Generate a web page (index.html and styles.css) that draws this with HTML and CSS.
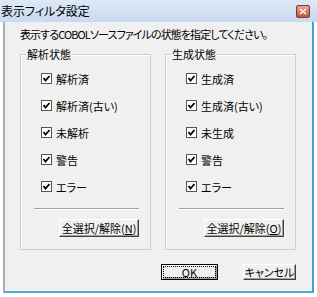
FILE: index.html
```html
<!DOCTYPE html>
<html lang="ja">
  <head>
    <meta charset="UTF-8" />
    <title>表示フィルタ設定</title>
    <link rel="stylesheet" href="styles.css">
  </head>
  <body>
    <div class="window">
      <div class="titlebar">
        <span class="title">表示フィルタ設定</span>
        <span class="close">
          <svg width="8" height="7" viewBox="0 0 8 7"><path d="M1 1 L7 6 M7 1 L1 6" stroke="#fff" stroke-width="1.6"/></svg>
        </span>
      </div>
      <div class="client">
        <p class="desc">表示するCOBOLソースファイルの状態を指定してください。</p>
        <div class="groups">
          <fieldset class="group">
            <legend>解析状態</legend>
            <ul class="checks">
              <li><span class="box"></span>解析済</li>
              <li><span class="box"></span>解析済(古い)</li>
              <li><span class="box"></span>未解析</li>
              <li><span class="box"></span>警告</li>
              <li><span class="box"></span>エラー</li>
            </ul>
            <div class="sep"></div>
            <div class="group-actions"><button class="btn wide">全選択/解除(<u>N</u>)</button></div>
          </fieldset>
          <fieldset class="group">
            <legend>生成状態</legend>
            <ul class="checks">
              <li><span class="box"></span>生成済</li>
              <li><span class="box"></span>生成済(古い)</li>
              <li><span class="box"></span>未生成</li>
              <li><span class="box"></span>警告</li>
              <li><span class="box"></span>エラー</li>
            </ul>
            <div class="sep"></div>
            <div class="group-actions"><button class="btn wide">全選択/解除(<u>O</u>)</button></div>
          </fieldset>
        </div>
        <div class="footer">
          <button class="btn ok"><span class="focus">OK</span></button>
          <button class="btn cancel">キャンセル</button>
        </div>
      </div>
    </div>
  </body>
</html>
```

FILE: styles.css
```css
body {
  margin: 0;
  background: #fff;
  font-family: "Noto Sans CJK JP", "Liberation Sans", sans-serif;
  font-feature-settings: "palt";
  font-size: 11px;
  color: #000;
}
.window {
  width: 317px;
  height: 297px;
  background: #fff;
}
.titlebar {
  height: 22px;
  display: flex;
  align-items: center;
  justify-content: space-between;
  background: linear-gradient(#dde9f6, #c8daee);
  padding: 0 7px 0 1px;
  box-sizing: border-box;
}
.title {
  font-size: 12px;
  line-height: 12px;
}
.close {
  width: 14px;
  height: 13px;
  box-sizing: border-box;
  border: 1px solid #7a3a30;
  border-radius: 2px;
  background: linear-gradient(#eba493, #c8503e);
  display: flex;
  align-items: center;
  justify-content: center;
}
.client {
  margin: 0 3px 0 3px;
  height: 271px;
  box-sizing: border-box;
  background: #f0f0f0;
  border-left: 2px solid #a4b0bc;
  border-right: 2px solid #3da2d3;
  border-bottom: 2px solid #4aaed8;
  padding: 6px 0 0 15px;
}
.desc {
  margin: 0;
  line-height: 12px;
  letter-spacing: -0.9px;
}
.groups {
  display: flex;
  gap: 14px;
  margin-top: 8px;
}
.group {
  width: 131px;
  box-sizing: border-box;
  margin: 0;
  padding: 0 0 12px 0;
  border: 1px solid #cfcfcf;
  box-shadow: inset 1px 1px #fff;
}
.group legend {
  margin-left: 5px;
  padding: 0 1px;
  line-height: 12px;
}
.checks {
  list-style: none;
  margin: 5px 0 0 0;
  padding: 0 0 0 20px;
}
.checks li {
  height: 27px;
  display: flex;
  align-items: center;
  gap: 4px;
}
.box {
  width: 11px;
  height: 11px;
  box-sizing: border-box;
  border: 1px solid #555;
  background: #fff url("data:image/svg+xml,%3Csvg xmlns='http://www.w3.org/2000/svg' width='9' height='9'%3E%3Cpath d='M1.5 4 L3.5 6.5 L7.5 2' fill='none' stroke='%23000' stroke-width='1.8'/%3E%3C/svg%3E") center no-repeat;
}
.sep {
  margin: 8px 11px 0 13px;
  border-top: 1px solid #a0a0a0;
  border-bottom: 1px solid #fff;
}
.group-actions {
  display: flex;
  justify-content: flex-end;
  padding-right: 11px;
  margin-top: 9px;
}
.btn {
  font-family: inherit;
  font-feature-settings: "palt";
  font-size: 11px;
  line-height: 12px;
  background: #f0f0f0;
  color: #000;
  border: 1px solid;
  border-color: #fff #404040 #404040 #fff;
  box-shadow: inset -1px -1px #a0a0a0;
  padding: 0;
  height: 18px;
}
.btn.wide {
  width: 80px;
}
.footer {
  display: flex;
  gap: 25px;
  margin: 14px 0 0 141px;
}
.btn.ok {
  width: 57px;
  height: 16px;
  border-color: #000;
  box-shadow: inset 1px 1px #fff, inset -2px -2px #a0a0a0;
  display: flex;
  align-items: center;
  justify-content: center;
}
.focus {
  display: block;
  width: 51px;
  border: 1px dotted #000;
  line-height: 10px;
  text-align: center;
}
.btn.cancel {
  width: 53px;
  height: 16px;
}
```
